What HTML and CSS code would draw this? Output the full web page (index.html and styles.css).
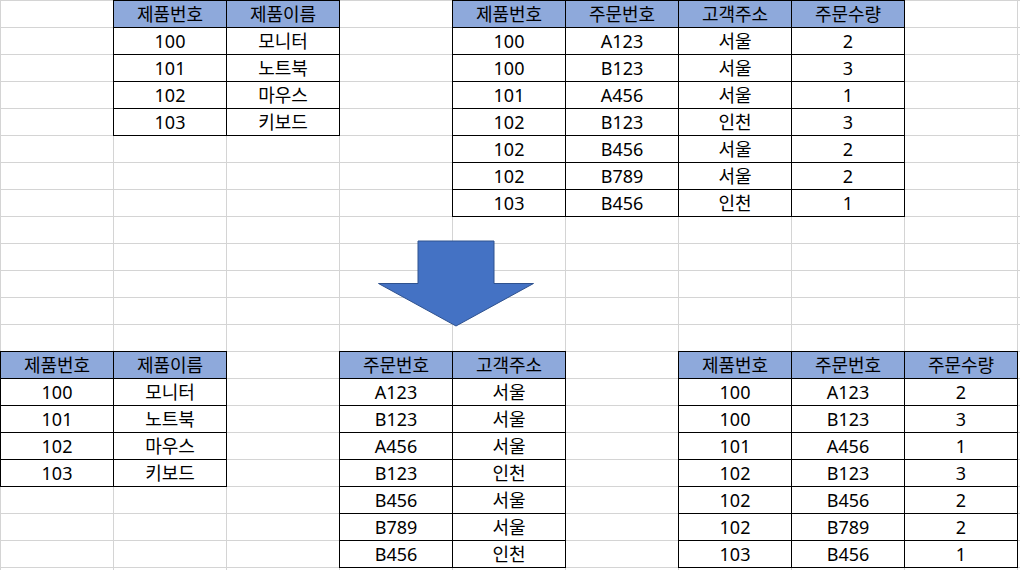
FILE: index.html
```html
<!DOCTYPE html>
<html lang="ko">
<head>
<meta charset="utf-8">
<title>테이블 분해</title>
<link rel="stylesheet" href="styles.css">
</head>
<body>
<div class="sheet">
  <div class="tbl cols-2 pos-top-left">
    <div class="c h">제품번호</div><div class="c h">제품이름</div>
    <div class="c">100</div><div class="c">모니터</div>
    <div class="c">101</div><div class="c">노트북</div>
    <div class="c">102</div><div class="c">마우스</div>
    <div class="c">103</div><div class="c">키보드</div>
  </div>

  <div class="tbl cols-4 pos-top-right">
    <div class="c h">제품번호</div><div class="c h">주문번호</div><div class="c h">고객주소</div><div class="c h">주문수량</div>
    <div class="c">100</div><div class="c">A123</div><div class="c">서울</div><div class="c">2</div>
    <div class="c">100</div><div class="c">B123</div><div class="c">서울</div><div class="c">3</div>
    <div class="c">101</div><div class="c">A456</div><div class="c">서울</div><div class="c">1</div>
    <div class="c">102</div><div class="c">B123</div><div class="c">인천</div><div class="c">3</div>
    <div class="c">102</div><div class="c">B456</div><div class="c">서울</div><div class="c">2</div>
    <div class="c">102</div><div class="c">B789</div><div class="c">서울</div><div class="c">2</div>
    <div class="c">103</div><div class="c">B456</div><div class="c">인천</div><div class="c">1</div>
  </div>

  <div class="tbl cols-2 pos-bot-left">
    <div class="c h">제품번호</div><div class="c h">제품이름</div>
    <div class="c">100</div><div class="c">모니터</div>
    <div class="c">101</div><div class="c">노트북</div>
    <div class="c">102</div><div class="c">마우스</div>
    <div class="c">103</div><div class="c">키보드</div>
  </div>

  <div class="tbl cols-2 pos-bot-mid">
    <div class="c h">주문번호</div><div class="c h">고객주소</div>
    <div class="c">A123</div><div class="c">서울</div>
    <div class="c">B123</div><div class="c">서울</div>
    <div class="c">A456</div><div class="c">서울</div>
    <div class="c">B123</div><div class="c">인천</div>
    <div class="c">B456</div><div class="c">서울</div>
    <div class="c">B789</div><div class="c">서울</div>
    <div class="c">B456</div><div class="c">인천</div>
  </div>

  <div class="tbl cols-3 pos-bot-right">
    <div class="c h">제품번호</div><div class="c h">주문번호</div><div class="c h">주문수량</div>
    <div class="c">100</div><div class="c">A123</div><div class="c">2</div>
    <div class="c">100</div><div class="c">B123</div><div class="c">3</div>
    <div class="c">101</div><div class="c">A456</div><div class="c">1</div>
    <div class="c">102</div><div class="c">B123</div><div class="c">3</div>
    <div class="c">102</div><div class="c">B456</div><div class="c">2</div>
    <div class="c">102</div><div class="c">B789</div><div class="c">2</div>
    <div class="c">103</div><div class="c">B456</div><div class="c">1</div>
  </div>

  <svg class="arrow" width="158" height="90" viewBox="0 0 158 90" aria-hidden="true">
    <polygon points="41,2 117,2 117,44.5 156.5,44.5 79,87 1.5,44.5 41,44.5" fill="#4472C4" stroke="#2F528F" stroke-width="1"/>
  </svg>
</div>
</body>
</html>
```

FILE: styles.css
```css
html, body {
  margin: 0;
  padding: 0;
  background: #ffffff;
  overflow: hidden;
}

.sheet {
  position: relative;
  width: 1020px;
  height: 570px;
  overflow: hidden;
  display: grid;
  grid-template-columns: repeat(9, 113px) 3px;
  grid-auto-rows: 27px;
  align-items: start;
  justify-items: start;
  background-color: #ffffff;
  background-image:
    repeating-linear-gradient(to right, #d4d4d4 0 1px, transparent 1px 113px),
    repeating-linear-gradient(to bottom, #d4d4d4 0 1px, transparent 1px 27px);
  font-family: "Noto Sans", "Noto Sans CJK KR", sans-serif;
  font-size: 18px;
  color: #000000;
}

.tbl {
  display: grid;
  grid-auto-rows: 27px;
  border-right: 1px solid #000;
  border-bottom: 1px solid #000;
  background: #ffffff;
}

.cols-2 { grid-template-columns: repeat(2, 113px); }
.cols-3 { grid-template-columns: repeat(3, 113px); }
.cols-4 { grid-template-columns: repeat(4, 113px); }

.c {
  border-left: 1px solid #000;
  border-top: 1px solid #000;
  display: flex;
  align-items: center;
  justify-content: center;
  line-height: 26px;
  white-space: nowrap;
}

.c.h {
  background: #8EA9DB;
}

.pos-top-left  { grid-column: 2 / span 2; grid-row: 1 / span 5; }
.pos-top-right { grid-column: 5 / span 4; grid-row: 1 / span 8; }
.pos-bot-left  { grid-column: 1 / span 2; grid-row: 14 / span 5; }
.pos-bot-mid   { grid-column: 4 / span 2; grid-row: 14 / span 8; }
.pos-bot-right { grid-column: 7 / span 3; grid-row: 14 / span 8; }

.arrow {
  position: absolute;
  left: 377px;
  top: 239px;
  overflow: visible;
}
```
